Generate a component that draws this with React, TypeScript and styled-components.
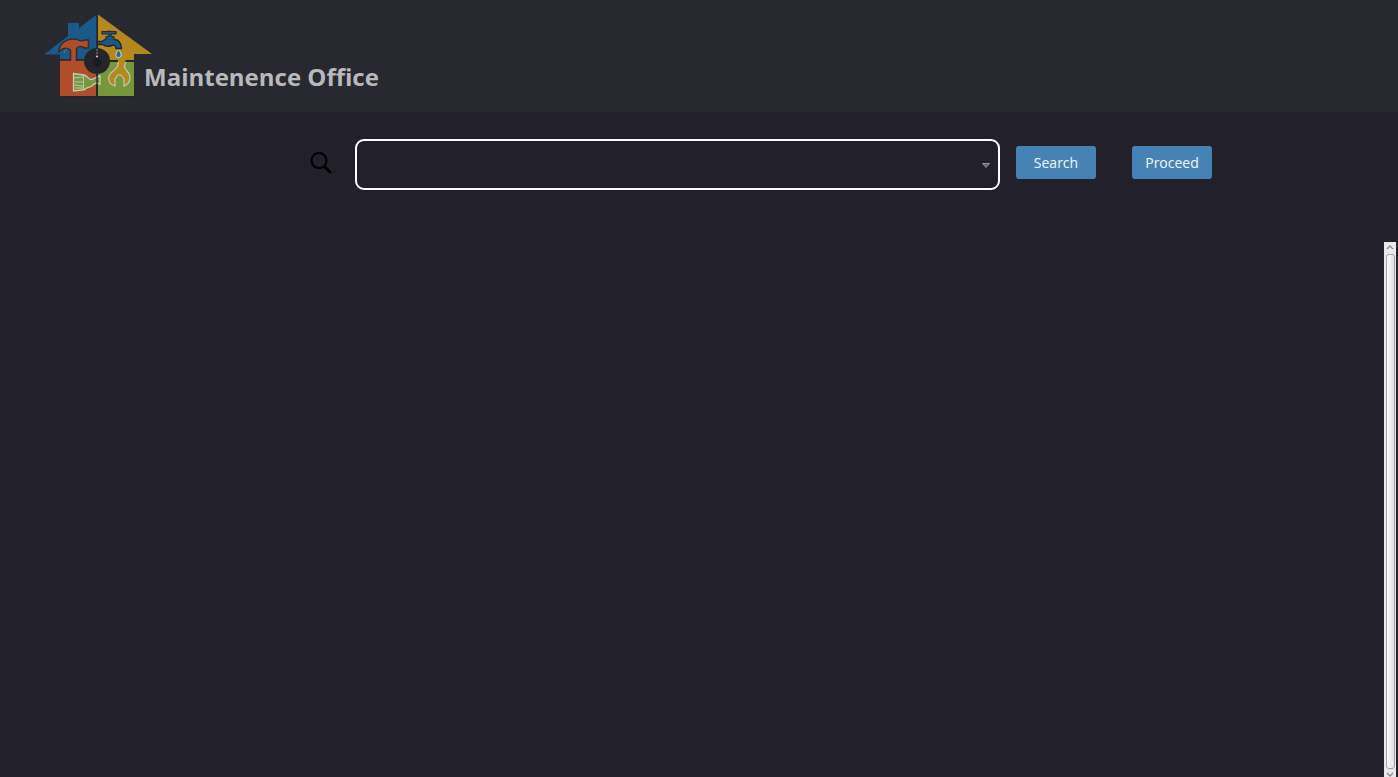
import React, { useState } from "react";
import styled, { createGlobalStyle } from "styled-components";

const GlobalStyle = createGlobalStyle`
  * { box-sizing: border-box; }
  body {
    margin: 0;
    background: #22212b;
    font-family: "Segoe UI", "Open Sans", "Noto Sans", sans-serif;
  }
`;

const Page = styled.div`
  display: flex;
  flex-direction: column;
  height: 100vh;
  overflow: hidden;
`;

const Header = styled.header`
  display: flex;
  align-items: flex-start;
  height: 112px;
  padding: 14px 44px 0;
  background: #282831;
`;

const Brand = styled.div`
  display: flex;
  align-items: flex-end;
`;

const Logo = styled.svg`
  display: block;
  width: 108px;
  height: 84px;
  margin-right: -8px;
`;

const Title = styled.h1`
  margin: 0;
  color: #b9b9bc;
  font-size: 24px;
  font-weight: 700;
  line-height: 42px;
  white-space: nowrap;
`;

const SearchForm = styled.form`
  display: flex;
  align-items: center;
  gap: 16px;
  padding: 27px 186px 52px 310px;
`;

const SearchLabel = styled.label`
  display: flex;
  width: 29px;
  margin-bottom: 4px;
`;

const Field = styled.div`
  display: flex;
  flex: 1;
  align-items: center;
  height: 51px;
  padding: 0 8px;
  border: 2px solid #fff;
  border-radius: 9px;
`;

const FieldInput = styled.input`
  flex: 1;
  min-width: 0;
  height: 40px;
  border: 0;
  outline: 0;
  background: transparent;
  color: #fff;
  font: inherit;
  font-size: 16px;
`;

const Arrow = styled.svg`
  width: 8px;
  height: 5px;
  margin-top: 2px;
`;

const Button = styled.button<{ $apart?: boolean }>`
  width: 80px;
  height: 33px;
  margin: 0 0 4px ${(p) => (p.$apart ? "20px" : "0")};
  padding: 0;
  border: 0;
  border-radius: 3px;
  background: #4682b4;
  color: #f4f8fb;
  font-family: inherit;
  font-size: 14px;
  line-height: 20px;
  cursor: pointer;
`;

const Results = styled.main`
  display: flex;
  flex: 1;
  justify-content: flex-end;
  min-height: 0;
  padding-right: 2px;
`;

const ScrollTrack = styled.div`
  display: flex;
  flex-direction: column;
  align-items: center;
  width: 12px;
  background: #e9e9e9;
`;

const ScrollArrow = styled.svg<{ $short?: boolean }>`
  flex: none;
  width: 8px;
  height: ${(p) => (p.$short ? "8px" : "12px")};
`;

const ScrollThumb = styled.div`
  flex: 1;
  width: 9px;
  border: 1px solid #a5a5a5;
  border-radius: 3px;
  background: linear-gradient(to right, #fafafa, #e2e2e2);
`;

function HouseLogo() {
  return (
    <Logo viewBox="0 0 108 84" aria-hidden="true">
      <path d="M0 40.5 24 22V9h11v5L53 .5V46H16v-5.500z" fill="#1b5a88" />
      <path d="M54 .5 108 40H90v6H54z" fill="#b5881f" />
      <path d="M16 46h36v37H16z" fill="#b04e29" />
      <path d="M54 48h36v35H54z" fill="#75993a" />
      <path d="M53 0v83M16 46h37M54 47h36M16 82.7h74" stroke="#25242b" strokeWidth="1.4" fill="none" />
      <path d="M26.500 47V36c-4-3-8-2-12 2 1-8 7-13 15-13 4 0 6 2 9 2l2-1h4v8h-4c-4-2-7-2-8 1v12" fill="#b04e29" stroke="#302c35" strokeWidth="1.5" />
      <path d="M53 27.500h5l3-2h9c5 0 7 3 7.500 9H72c0-3-2-4-4-3-3 1-7 1-9-1h-6z" fill="#1b5a88" stroke="#28252c" strokeWidth="1.5" />
      <path d="M62 26v-3l3-1v-2h-7v-2.500h6l1-.5 1 .5h6V20h-5v2l3 1v3z" fill="#1b5a88" stroke="#28252c" strokeWidth="1.2" />
      <path d="M62 25.500h8v3h-8z" fill="#1b5a88" />
      <path d="M74 45v5c0 3-2 5-6 8-5 4-4 11 1 13l2 1v-7l3-4h3l3 4v7l2-1c5-3 5-10 1-14-3-3-3-6-1-12" fill="#b5881f" />
      <path d="M74 48v2c0 3-2 5-6 8-5 4-4 11 1 13l2 1v-7l3-4h3l3 4v7l2-1c5-3 5-10 1-14-3-3-3-6-1-9" fill="none" stroke="#c9c4b7" strokeWidth="1.200" />
      <path d="M74.500 36c4 4 3 7.500 0 7.500s-4-3.500 0-7.500z" fill="#1b6da3" stroke="#d7dddc" strokeWidth="1" />
      <path d="M29.500 59.500 40 61c4 1 4 4 7 4.500 3 0 5-3 9-3.500v8c-4-1-6-1-8 2-3 2-5 1-8 4l-10.500 1z" fill="#75993a" stroke="#c8c9bd" strokeWidth="1.3" />
      <path d="M39.500 61v15M30 64l9-1M31 68h8M30 71l9 1M31 74h8" stroke="#c8c9bd" strokeWidth=".9" />
      <path d="M53 60v22" stroke="#28252c" strokeWidth="1.4" />
      <circle cx="53" cy="47" r="13" fill="#25242b" />
      <circle cx="53" cy="48.500" r="4.500" fill="#1b1a20" />
      <circle cx="53" cy="42.500" r="1" fill="#deddda" />
      <path d="M53 35v5" stroke="#8d8a84" strokeDasharray="2 1" />
      <path d="M23 35q-3 1-3 4" stroke="#527c99" fill="none" />
    </Logo>
  );
}

export default function App() {
  const [query, setQuery] = useState("");
  return (
    <Page>
      <GlobalStyle />
      <Header>
        <Brand>
          <HouseLogo />
          <Title>Maintenence Office</Title>
        </Brand>
      </Header>
      <SearchForm onSubmit={(e) => e.preventDefault()}>
        <SearchLabel htmlFor="query" aria-label="Search query">
          <svg width="22" height="22" viewBox="0 0 22 22" fill="none" stroke="#000">
            <circle cx="9" cy="8.500" r="7.500" strokeWidth="2.200" />
            <path d="m14 14 7 7" strokeWidth="3" />
          </svg>
        </SearchLabel>
        <Field>
          <FieldInput id="query" autoComplete="off" value={query} onChange={(e) => setQuery(e.target.value)} />
          <Arrow viewBox="0 0 8 5" aria-hidden="true">
            <path d="M.5.5h7L4 4.500z" fill="#666" stroke="#aaa" strokeWidth=".8" />
          </Arrow>
        </Field>
        <Button type="submit">Search</Button>
        <Button type="button" $apart>Proceed</Button>
      </SearchForm>
      <Results>
        <ScrollTrack aria-hidden="true">
          <ScrollArrow viewBox="0 0 8 12" fill="none" stroke="#8a8a8a" strokeWidth="1.3">
            <path d="m1 7 3-3 3 3" />
          </ScrollArrow>
          <ScrollThumb />
          <ScrollArrow $short viewBox="0 0 8 8" fill="none" stroke="#8a8a8a" strokeWidth="1.3">
            <path d="m1 4 3 3 3-3" />
          </ScrollArrow>
        </ScrollTrack>
      </Results>
    </Page>
  );
}
